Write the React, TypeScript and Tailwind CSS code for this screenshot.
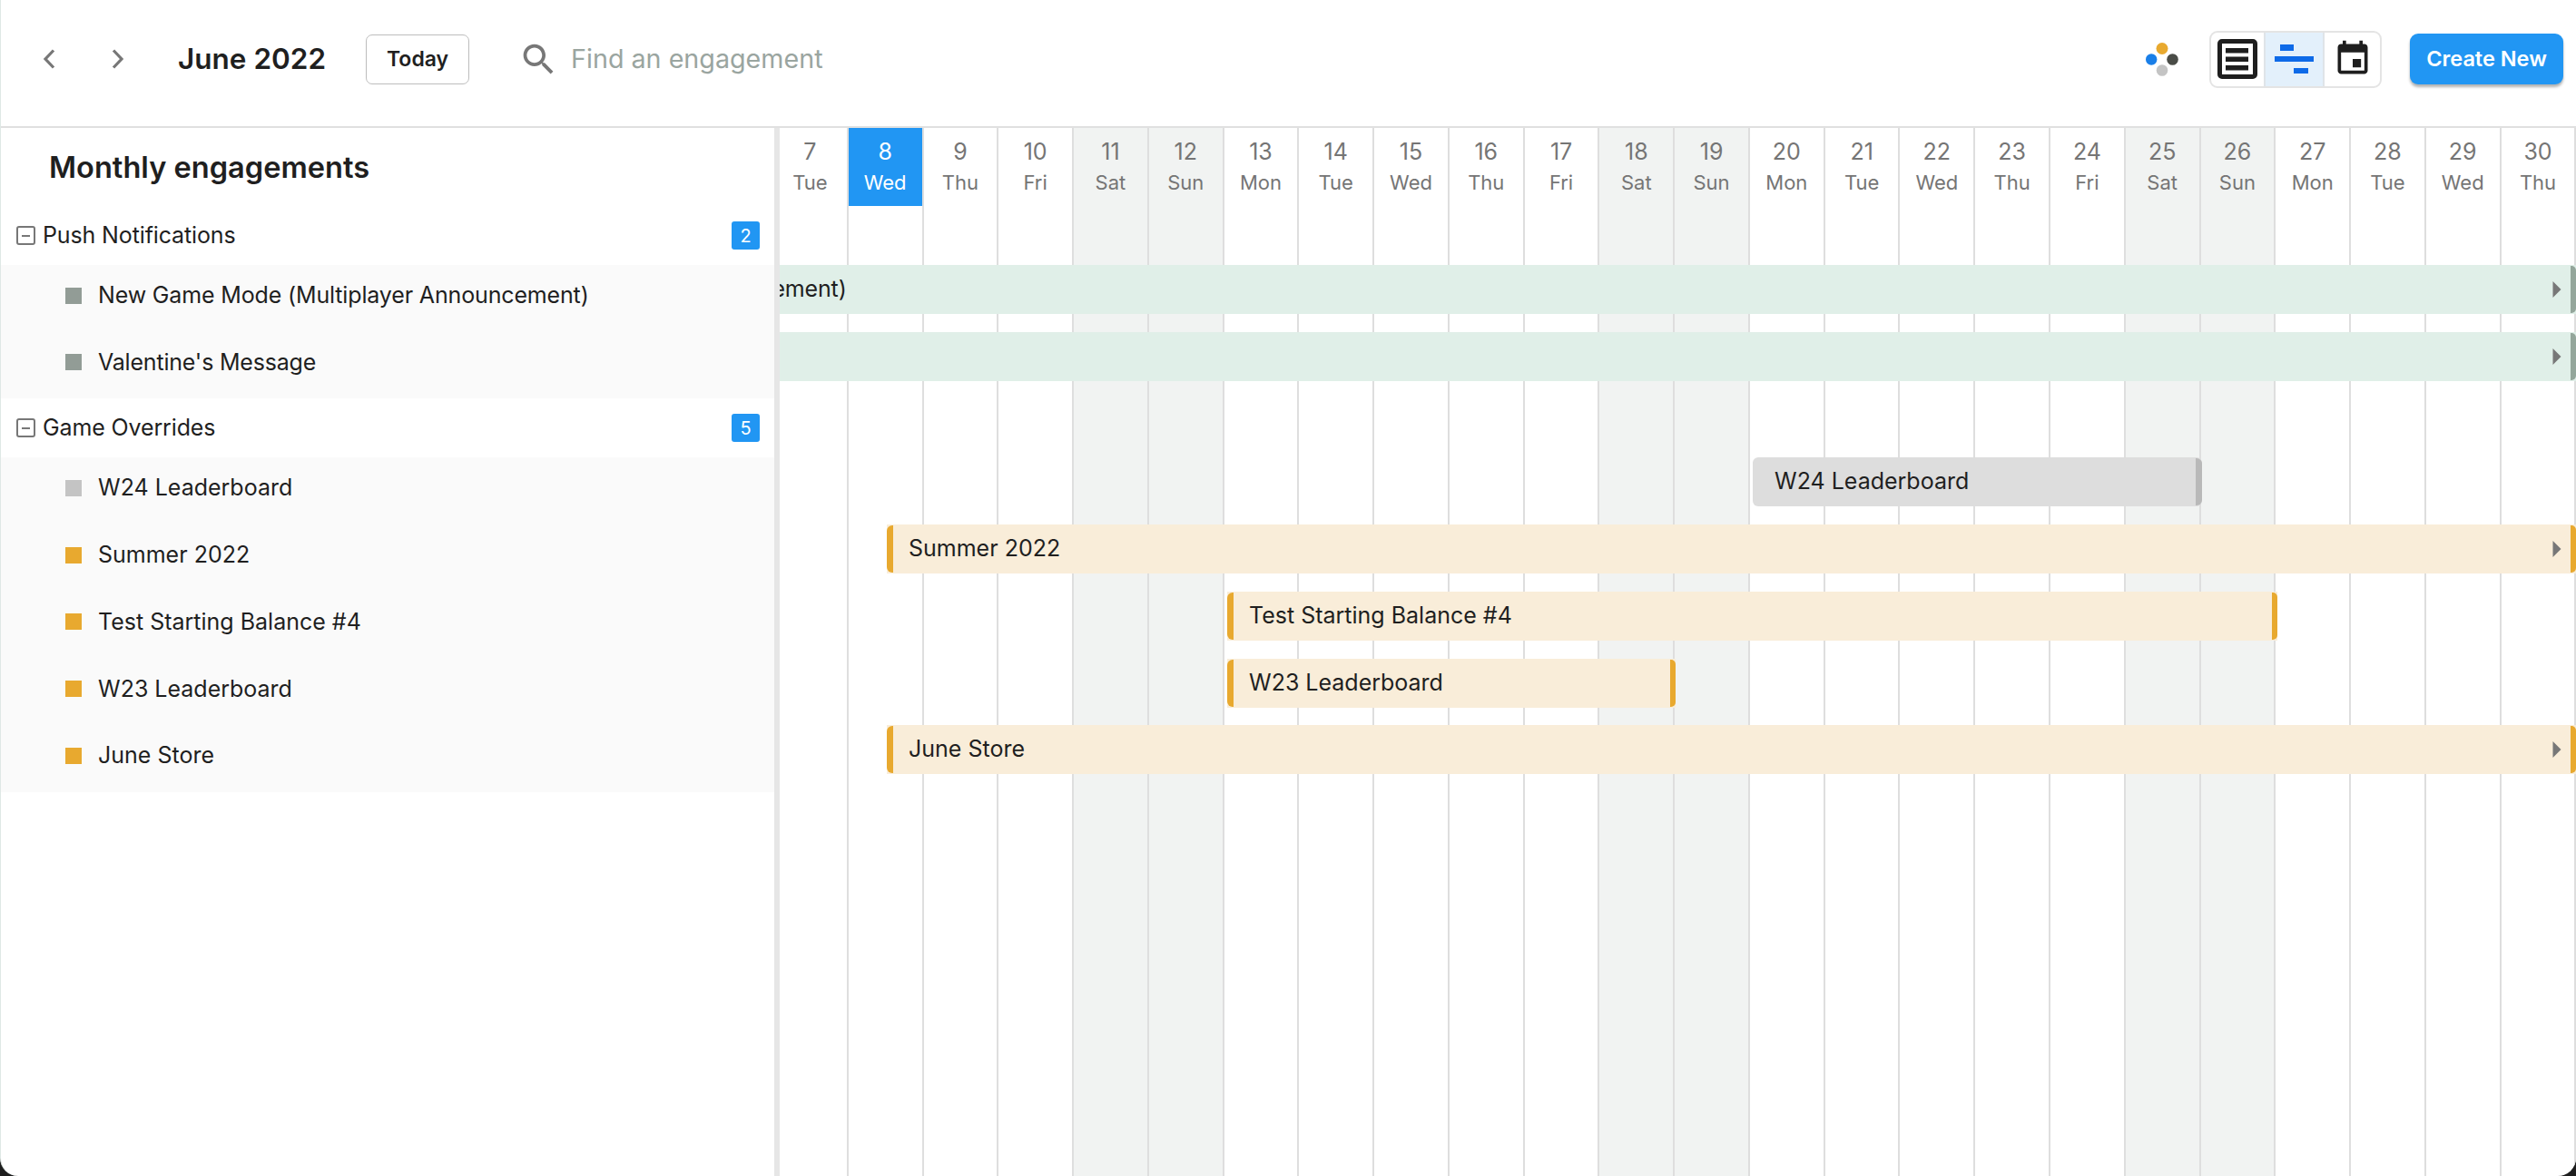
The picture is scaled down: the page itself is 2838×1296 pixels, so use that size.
import React from "react";

const names = ["Tue", "Wed", "Thu", "Fri", "Sat", "Sun", "Mon"];
const days = Array.from({ length: 24 }, (_, i) => ({ d: 7 + i, n: names[i % 7] }));

type Tone = "green" | "orange" | "gray";
const tones: Record<Tone, { bg: string; accent: string }> = {
  green: { bg: "bg-[#e0efe8]", accent: "bg-[#94a69b]" },
  orange: { bg: "bg-[#f9edd9]", accent: "bg-[#e8a92f]" },
  gray: { bg: "bg-[#dddddd]", accent: "bg-[#b9b9b9]" },
};

function Bar({
  tone,
  cls,
  text,
  left,
  right,
  textCls,
}: {
  tone: Tone;
  cls: string;
  text?: string;
  left?: boolean;
  right?: boolean;
  textCls?: string;
}) {
  const t = tones[tone];
  const clipped = !right;
  return (
    <div className={`h-[54px] shrink-0 flex items-center ${t.bg} ${cls}`}>
      {left && <div className={`w-[7px] h-[52px] rounded-l-[6px] shrink-0 ${t.accent}`} />}
      {text && <span className={`whitespace-nowrap ${textCls ?? "ml-[17px]"}`}>{text}</span>}
      <div className="ml-auto flex items-center h-full">
        {clipped && (
          <svg width="10" height="18" viewBox="0 0 10 18" className="mr-[10px]">
            <path d="M0.5 0 L9.5 9 L0.5 18 Z" fill="#777777" />
          </svg>
        )}
        {tone === "gray" ? (
          <div className={`w-[7px] h-[52px] rounded-r-[6px] ${t.accent}`} />
        ) : (
          <div className={`w-[6px] h-[52px] rounded-r-[5px] ${t.accent}`} />
        )}
      </div>
    </div>
  );
}

function Group({ title, count }: { title: string; count: number }) {
  return (
    <div className="h-[65px] flex items-center shrink-0">
      <div className="ml-[17px] w-[21px] h-[21px] border-2 border-[#777777] rounded-[3px] flex items-center justify-center shrink-0">
        <div className="w-[9px] h-[2px] bg-[#777777]" />
      </div>
      <span className="ml-[8px] tracking-[-0.13px]">{title}</span>
      <div className="ml-auto mr-[16px] w-[31px] h-[31px] rounded-[3px] bg-[#2196f3] text-white text-[20px] flex items-center justify-center">
        {count}
      </div>
    </div>
  );
}

function Item({ label, color, cls, textCls }: { label: string; color: string; cls: string; textCls?: string }) {
  return (
    <div className={`${cls} flex items-center pb-[6px]`}>
      <div className={`ml-[71px] w-[18px] h-[18px] shrink-0 ${color}`} />
      <span className={`ml-[18px] ${textCls ?? ""}`}>{label}</span>
    </div>
  );
}

export default function App() {
  return (
    <div className="h-screen w-full overflow-hidden bg-[#1e1e1e] font-['Inter',sans-serif] text-[#1f1f1f] text-[25px]">
      <div className="h-full bg-white rounded-b-[20px] overflow-hidden flex flex-col border-l border-[#dfe8e5]">
        <header className="h-[141px] shrink-0 border-b-2 border-[#e0e0e0] flex items-center pb-[9px]">
          <svg width="14" height="22" viewBox="0 0 14 22" className="ml-[46px]" fill="none">
            <path d="M12 1.5 L3 11 L12 20.5" stroke="#777777" strokeWidth="3.2" />
          </svg>
          <svg width="14" height="22" viewBox="0 0 14 22" className="ml-[62px]" fill="none">
            <path d="M2 1.5 L11 11 L2 20.5" stroke="#777777" strokeWidth="3.2" />
          </svg>
          <div className="ml-[59px] text-[31.5px] font-semibold whitespace-nowrap leading-none">June 2022</div>
          <button className="ml-[44px] w-[114px] h-[55px] border border-[#bdbdbd] rounded-[7px] text-[23px] font-semibold flex items-center justify-center">
            Today
          </button>
          <svg width="45" height="45" viewBox="0 0 24 24" className="ml-[54px]" fill="#777777">
            <path d="M15.5 14h-.79l-.28-.27C15.41 12.59 16 11.11 16 9.5 16 5.91 13.09 3 9.5 3S3 5.91 3 9.5 5.91 16 9.5 16c1.61 0 3.09-.59 4.23-1.57l.27.28v.79l5 4.99L20.49 19l-4.99-5zm-6 0C7.01 14 5 11.99 5 9.5S7.01 5 9.5 5 14 7.01 14 9.5 11.99 14 9.5 14z" />
          </svg>
          <div className="ml-[13px] text-[28.7px] text-[#9aa5a0] whitespace-nowrap">Find an engagement</div>

          <svg width="36" height="37" viewBox="0 0 36 37" className="ml-auto">
            <circle cx="18" cy="6.5" r="6.5" fill="#e8a92f" />
            <circle cx="6.2" cy="18.5" r="6.2" fill="#1a7fe8" />
            <circle cx="29.5" cy="18.5" r="6.3" fill="#4a4c47" />
            <circle cx="18" cy="30.5" r="6.3" fill="#c4c4c4" />
          </svg>
          <div className="ml-[34px] h-[63px] w-[190px] border-2 border-[#e4e4e4] rounded-[9px] flex overflow-hidden">
            <div className="w-[58px] flex items-center justify-center">
              <svg width="44" height="44" viewBox="0 0 44 44">
                <rect x="2.5" y="2.5" width="39" height="39" rx="2.5" fill="none" stroke="#1e1e1e" strokeWidth="5" />
                <rect x="9" y="10" width="25" height="5.5" fill="#1e1e1e" />
                <rect x="9" y="19.5" width="25" height="5.5" fill="#1e1e1e" />
                <rect x="9" y="29" width="25" height="5.5" fill="#1e1e1e" />
              </svg>
            </div>
            <div className="w-[67px] bg-[#e3f0fb] border-x-2 border-[#dfe4e8] flex items-center justify-center">
              <svg width="44" height="33" viewBox="0 0 44 33">
                <rect x="6" y="0" width="15" height="7" fill="#0d6ae8" />
                <rect x="0" y="13" width="43" height="6" fill="#0d6ae8" />
                <rect x="21" y="26" width="16" height="6" fill="#0d6ae8" />
              </svg>
            </div>
            <div className="flex-1 flex items-center justify-center">
              <svg width="44" height="44" viewBox="0 0 24 24" fill="#1e1e1e">
                <path d="M17 12h-5v5h5v-5zM16 1v2H8V1H6v2H5c-1.11 0-1.99.9-1.99 2L3 19c0 1.1.89 2 2 2h14c1.1 0 2-.9 2-2V5c0-1.1-.9-2-2-2h-1V1h-2zm3 18H5V8h14v11z" />
              </svg>
            </div>
          </div>
          <button className="ml-[31px] mr-[14px] w-[169px] h-[56px] rounded-[9px] bg-[#2196f3] text-white text-[23.5px] font-semibold shadow-[0_3px_3px_rgba(0,0,0,0.3)] whitespace-nowrap">
            Create New
          </button>
        </header>

        <div className="flex-1 flex min-h-0">
          <aside className="w-[852px] shrink-0 flex flex-col">
            <div className="h-[86px] shrink-0 flex items-center pl-[53px] text-[32.6px] font-semibold whitespace-nowrap">Monthly engagements</div>
            <Group title="Push Notifications" count={2} />
            <div className="bg-[#fafafa] shrink-0">
              <Item cls="h-[73.5px]" color="bg-[#929c96]" label="New Game Mode (Multiplayer Announcement)" textCls="tracking-[-0.15px]" />
              <Item cls="h-[73.5px]" color="bg-[#929c96]" label="Valentine's Message" textCls="tracking-[-0.2px]" />
            </div>
            <Group title="Game Overrides" count={5} />
            <div className="bg-[#fafafa] shrink-0">
              <Item cls="h-[73.8px]" color="bg-[#c4c4c4]" label="W24 Leaderboard" />
              <Item cls="h-[73.8px]" color="bg-[#e8a92f]" label="Summer 2022" />
              <Item cls="h-[73.8px]" color="bg-[#e8a92f]" label="Test Starting Balance #4" />
              <Item cls="h-[73.8px]" color="bg-[#e8a92f]" label="W23 Leaderboard" />
              <Item cls="h-[73.8px]" color="bg-[#e8a92f]" label="June Store" />
            </div>
          </aside>
          <div className="w-[6px] shrink-0 bg-[#e6e6e6]" />

          <main className="relative flex-1 min-w-0 overflow-hidden">
            <div className="absolute inset-y-0 left-[-7px] flex">
              {days.map(({ d, n }) => {
                const weekend = n === "Sat" || n === "Sun";
                const today = d === 8;
                return (
                  <div
                    key={d}
                    className={`w-[82.77px] shrink-0 h-full border-r-2 border-[#dedede] ${weekend ? "bg-[#f1f3f2]" : ""}`}
                  >
                    <div
                      className={`h-[86px] flex flex-col items-center pt-[11px] ${
                        today ? "bg-[#2196f3] text-white" : "text-[#757575]"
                      }`}
                    >
                      <div className="text-[25px] leading-[30px]">{d}</div>
                      <div className="text-[22px] leading-[30px] mt-[4px]">{n}</div>
                    </div>
                  </div>
                );
              })}
            </div>
            <div className="relative flex flex-col gap-[20px] pt-[151px]">
              <Bar tone="green" cls="w-[1979px]" text="New Game Mode (Multiplayer Announcement)" textCls="ml-[-467px] tracking-[-0.15px]" />
              <Bar tone="green" cls="w-[1979px]" />
              <Bar tone="gray" cls="w-[495px] ml-[1072px] mt-[64px] rounded-[6px]" text="W24 Leaderboard" left={false} right textCls="ml-[24px]" />
              <Bar tone="orange" cls="w-[1861px] ml-[118px]" text="Summer 2022" left />
              <Bar tone="orange" cls="w-[1157px] ml-[493px]" text="Test Starting Balance #4" left right />
              <Bar tone="orange" cls="w-[494px] ml-[493px]" text="W23 Leaderboard" left right />
              <Bar tone="orange" cls="w-[1861px] ml-[118px] mt-[-1px]" text="June Store" left />
            </div>
          </main>
        </div>
      </div>
    </div>
  );
}
